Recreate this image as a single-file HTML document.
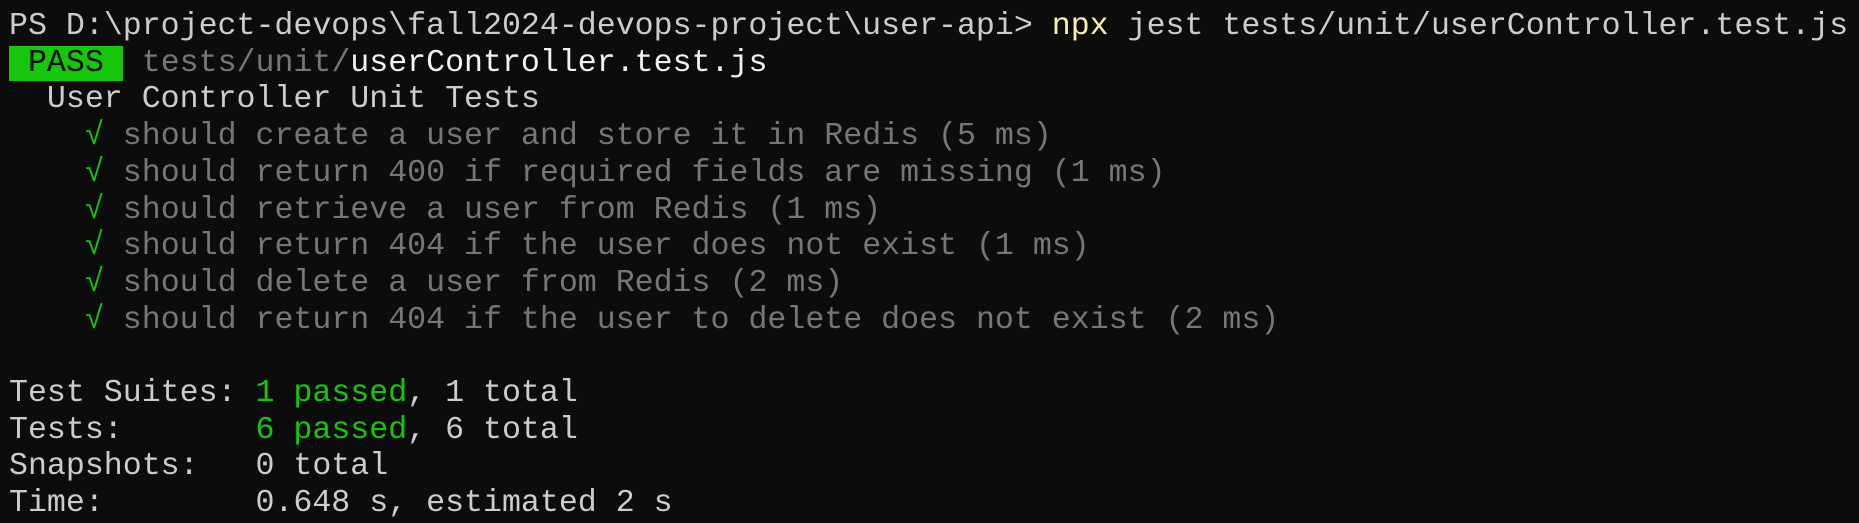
<!DOCTYPE html>
<html><head><meta charset="utf-8"><style>
html,body{margin:0;padding:0;background:#0c0c0c;}
body{width:1859px;height:523px;overflow:hidden;}
pre{margin:0;padding:9px 0 0 9px;font-family:"Liberation Mono","DejaVu Sans Mono",monospace;font-size:31.6px;line-height:36.7px;color:#cccccc;white-space:pre;}
.y{color:#f9f1a5}.g{color:#16c60c}.d{color:#767676}.w{color:#f2f2f2}
.p{background:#16c60c;color:#0c0c0c}
</style></head><body><pre>PS D:\project-devops\fall2024-devops-project\user-api&gt; <span class="y">npx</span> jest tests/unit/userController.test.js
<span class="p"> PASS </span> <span class="d">tests/unit/</span><span class="w">userController.test.js</span>
  User Controller Unit Tests
    <span class="g">√</span> <span class="d">should create a user and store it in Redis (5 ms)</span>
    <span class="g">√</span> <span class="d">should return 400 if required fields are missing (1 ms)</span>
    <span class="g">√</span> <span class="d">should retrieve a user from Redis (1 ms)</span>
    <span class="g">√</span> <span class="d">should return 404 if the user does not exist (1 ms)</span>
    <span class="g">√</span> <span class="d">should delete a user from Redis (2 ms)</span>
    <span class="g">√</span> <span class="d">should return 404 if the user to delete does not exist (2 ms)</span>

Test Suites: <span class="g">1 passed</span>, 1 total
Tests:       <span class="g">6 passed</span>, 6 total
Snapshots:   0 total
Time:        0.648 s, estimated 2 s</pre></body></html>
